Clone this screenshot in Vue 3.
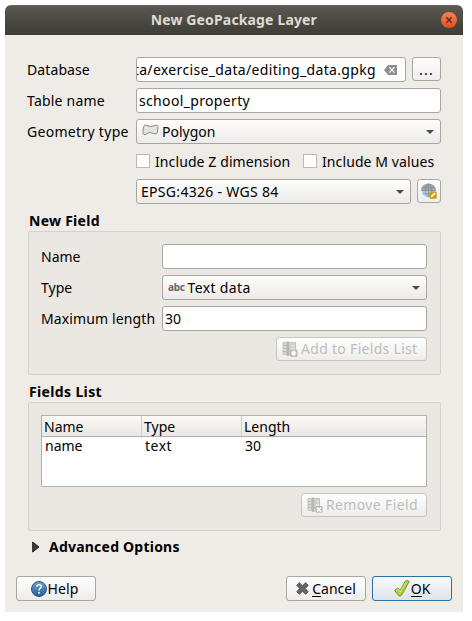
<script setup>
import { ref } from 'vue'

const database = ref('ta/exercise_data/editing_data.gpkg')
const tableName = ref('school_property')
const maxLength = ref('30')
const fields = ref([{ name: 'name', type: 'text', length: '30' }])
</script>

<template>
  <main class="dialog">
    <header class="titlebar">
      <h1 class="title">New GeoPackage Layer</h1>
      <span class="close">
        <svg width="16" height="16" viewBox="0 0 16 16"><path d="M5.3 5.3l5.4 5.4M10.7 5.3l-5.4 5.4" stroke="#45301f" stroke-width="1.3" /></svg>
      </span>
    </header>

    <section class="form">
      <div class="row">
        <span class="label l-db">Database</span>
        <div class="input path">
          <div class="clip"><span class="t-path">{{ database }}</span></div>
          <svg class="clear" width="13" height="10" viewBox="0 0 13 10"><path d="M0 5L4 0H13V10H4Z" fill="#8e8e8e" /><path d="M5.3 2.2l5.2 5.4M10.5 2.2l-5.2 5.4" stroke="#fff" stroke-width="1.2" /></svg>
        </div>
        <button class="btn dots"><span>...</span></button>
      </div>
      <div class="row">
        <span class="label l-table">Table name</span>
        <div class="input"><span class="t-table">{{ tableName }}</span></div>
      </div>
      <div class="row">
        <span class="label l-geom">Geometry type</span>
        <div class="combo">
          <svg class="poly" width="17" height="12" viewBox="0 0 17 12"><path d="M2.4 1.2Q3.5.7 5 1.5Q8.5 3.7 12 1.7Q15.5 .2 16 2.2L15.4 9Q14.8 10.8 11.5 9.4Q7.5 7 4.2 10.1Q1.1 11.9 1 8.2Q.8 3.2 2.4 1.2Z" fill="#e3e3e1" stroke="#8b8b88" /></svg>
          <span class="t-poly">Polygon</span><i class="arrow"></i>
        </div>
      </div>
      <div class="checks">
        <label class="check"><i class="box"></i><span class="t-z">Include Z dimension</span></label>
        <label class="check"><i class="box"></i><span class="t-m">Include M values</span></label>
      </div>
      <div class="row crs">
        <span class="label"></span>
        <div class="combo"><span class="t-epsg">EPSG:4326 - WGS 84</span><i class="arrow"></i></div>
        <button class="btn globe">
          <svg width="16" height="16" viewBox="0 0 16 16"><circle cx="7.5" cy="7.5" r="6.8" fill="#a9c9e4" /><path d="M0 7.5a7.5 7 0 0 1 15 0Z" fill="#a2a5a7" /><path d="M0 7.5h15M1.4 4.5h12M2 10.8h10M7.5.7v13.5M7.5.7Q1.2 7.5 7.5 14.2M7.5.7Q13.8 7.5 7.5 14.2" fill="none" stroke="#74838e" stroke-width=".5" /><rect x="8.5" y="8.5" width="7.2" height="7.2" rx="1" fill="#c8a20b" /><path d="M10 14.2l.6-2 3-2.6 1 1-2.8 2.8Z" fill="#fff" /></svg>
        </button>
      </div>
    </section>

    <h2 class="heading h-new">New Field</h2>
    <section class="group newfield">
      <div class="row">
        <span class="label l-name">Name</span><div class="input"></div>
      </div>
      <div class="row">
        <span class="label l-type">Type</span>
        <div class="combo"><span class="abc">abc</span><span class="t-text">Text data</span><i class="arrow"></i></div>
      </div>
      <div class="row">
        <span class="label l-max">Maximum length</span><div class="input"><span class="num">{{ maxLength }}</span></div>
      </div>
      <button class="btn disabled add">
        <svg width="16" height="16" viewBox="0 0 16 16"><path d="M1 1.5h3.5v12H1z" fill="#dcdad7" stroke="#c6c3bf" /><path d="M4.8.5h2.8v14.5h-2.8z" fill="#b9b6b2" /><path d="M8.2 1.5H13.5v12H8.2z" fill="#e6e4e1" stroke="#c6c3bf" /><path d="M1 4.5h3.5M1 7.5h3.5M1 10.5h3.5M8.5 3h5M8.5 6h5" stroke="#bfbcb8" /><rect x="8" y="8.5" width="7.5" height="7.3" rx="1" fill="#bdbab6" /><path d="M11.7 9.5v5.2M9.1 12.1h5.2M9.9 10.3l3.6 3.6M13.5 10.3l-3.6 3.6" stroke="#fff" stroke-width="1.1" /></svg>
        <span class="t-add">Add to Fields List</span>
      </button>
    </section>

    <h2 class="heading h-list">Fields List</h2>
    <section class="group fieldlist">
      <div class="table">
        <div class="thead"><span class="th-name">Name</span><span class="th-type">Type</span><span class="th-len">Length</span></div>
        <div v-for="f in fields" :key="f.name" class="tr"><span class="td-name">{{ f.name }}</span><span class="td-type">{{ f.type }}</span><span class="num">{{ f.length }}</span></div>
      </div>
      <button class="btn disabled remove">
        <svg width="16" height="16" viewBox="0 0 16 16"><path d="M1 1.5h3.5v12H1z" fill="#dcdad7" stroke="#c6c3bf" /><path d="M4.8.5h2.8v14.5h-2.8z" fill="#b9b6b2" /><path d="M8.2 1.5H12.5v12H8.2z" fill="#e6e4e1" stroke="#c6c3bf" /><path d="M1 4.5h3.5M1 7.5h3.5M1 10.5h3.5M8.5 3h4M8.5 6h4" stroke="#bfbcb8" /><rect x="8.5" y="9" width="7" height="6.8" rx="1.2" fill="#bdbab6" /><path d="M10 10.5l4 4M14 10.5l-4 4" stroke="#fff" stroke-width="1.5" /></svg>
        <span class="t-remove">Remove Field</span>
      </button>
    </section>

    <div class="advanced">
      <svg width="8" height="12" viewBox="0 0 8 12"><path d="M.7 1L7 6L.7 11Z" fill="#3d3d3d" stroke="#222" /></svg>
      <h2 class="t-adv">Advanced Options</h2>
    </div>

    <footer class="footer">
      <button class="btn action help">
        <svg width="16" height="16" viewBox="0 0 16 16"><defs><linearGradient id="hg" x2="0" y2="1"><stop stop-color="#6fa3d3" /><stop offset="1" stop-color="#245f98" /></linearGradient></defs><circle cx="8" cy="8" r="7.5" fill="url(#hg)" stroke="#2b5582" /><path d="M5.8 5.7Q6 3.6 8.1 3.6Q10.3 3.7 10.2 5.6Q10.1 6.8 8.9 7.5Q8 8.1 8 9.4" fill="none" stroke="#fff" stroke-width="1.4" /><circle cx="8" cy="11.7" r=".95" fill="#fff" /></svg>
        <span class="t-help">Help</span>
      </button>
      <button class="btn action cancel">
        <svg width="13" height="13" viewBox="0 0 13 13"><path d="M3.3.8L6.5 3.7L9.7.8L12.2 3.2L9.3 6.5L12.2 9.8L9.7 12.2L6.5 9.3L3.3 12.2L.8 9.8L3.7 6.5L.8 3.2Z" fill="#656565" stroke="#484848" stroke-width=".9" stroke-linejoin="round" /></svg>
        <span class="t-cancel"><u>C</u>ancel</span>
      </button>
      <button class="btn action ok">
        <svg width="16" height="17" viewBox="0 0 16 17"><path d="M.7 10.4L3.8 7.9L6.1 10.4L11.2 1.2Q13.2-.1 15.3 1.4L7.8 14.8Q6.3 16.8 4.6 15.6Z" fill="#b3d335" stroke="#628b22" stroke-width=".9" stroke-linejoin="round" /><path d="M2.4 10.2l1.4-1.1L6.3 12L12 2" fill="none" stroke="#dceb91" /></svg>
        <span class="t-ok"><u>O</u>K</span>
      </button>
    </footer>
  </main>
</template>

<style>
body { background: #fff; }
</style>
<style scoped>
* { box-sizing: border-box; }
.dialog { width: 458px; height: 607px; margin: 5px; background: #efebe7; border-radius: 6px 6px 0 0; display: flex; flex-direction: column; font: 14px/20px "Noto Sans", sans-serif; color: #000; white-space: nowrap; overflow: hidden; }
h1, h2 { margin: 0; font-size: 14px; font-weight: 700; }
.titlebar { height: 30px; flex: none; display: flex; align-items: center; justify-content: flex-end; padding-right: 6px; background: linear-gradient(#5a5850, #3d3c37); border-top: 1px solid #6b6860; }
.title { color: #dfdbd2; font-size: 14px; line-height: 18px; padding-bottom: 2px; margin-right: 124px; letter-spacing: .15px; }
.close { width: 16px; height: 16px; border-radius: 50%; background: linear-gradient(#f5815d, #e3501e); box-shadow: 0 0 0 .5px #6d3a26; display: flex; margin-bottom: 1px; }
.form { padding: 22px 22px 0; display: flex; flex-direction: column; gap: 6px; }
.row { display: flex; height: 25px; }
.form .label { width: 109px; flex: none; line-height: 26px; }
.input, .combo { flex: 1; min-width: 0; display: flex; align-items: center; height: 25px; border: 1px solid #a9a5a1; border-radius: 3px; background: #fff; padding: 0 2px; }
.combo { background: linear-gradient(#fdfdfc, #ecebe9); padding: 0 6px 0 4px; }
.path { padding: 0 8px 0 0; }
.clip { flex: 1; min-width: 0; display: flex; justify-content: flex-end; overflow: hidden; }
.clear { margin-left: 8px; flex: none; }
.arrow { margin-left: auto; border: 4px solid transparent; border-top: 4px solid #4d4d4d; border-bottom: 0; }
.btn { font: inherit; color: #000; margin: 0; padding: 0; border: 1px solid #aaa6a2; border-radius: 3px; background: linear-gradient(#fefefe, #eeedec); display: flex; align-items: center; justify-content: center; flex: none; }
.dots { width: 29px; height: 24px; margin-left: 6px; letter-spacing: 1.2px; padding-top: 1px; }
.poly { margin: -3px 3px 0 1px; }
.checks { display: flex; height: 23px; padding-left: 109px; align-items: center; margin-top: 0; }
.check { display: flex; align-items: center; gap: 5px; letter-spacing: .1px; }
.check:first-child { width: 167px; }
.box { width: 14px; height: 14px; border: 1px solid #bcb8b4; background: #fff; margin-bottom: 1px; }
.globe { width: 24px; height: 24px; margin-left: 6px; }
.heading { height: 20px; margin: 7px 0 0 24px; flex: none; }
.group { margin: 0 22px 0 23px; border: 1px solid #d5d1cd; border-radius: 2px; background: #ebe7e3; padding: 12px 13px 0 12px; flex: none; display: flex; flex-direction: column; }
.newfield { height: 144px; gap: 6px; }
.newfield .label { width: 121px; flex: none; line-height: 25px; }
.abc { font-size: 10px; font-weight: 700; color: #666; margin: -2px 3px 0 1px; letter-spacing: -.3px; }
.disabled { align-self: flex-end; height: 24px; color: #bebdbb; border-color: #c8c5c1; justify-content: flex-start; padding-left: 5px; gap: 3px; }
.add { width: 151px; }
.remove { width: 126px; }
.fieldlist { height: 129px; gap: 6px; }
.table { height: 72px; border: 1px solid #b3afab; background: #fff; }
.thead { display: grid; grid-template-columns: 99px 100px 1fr; height: 21px; background: linear-gradient(#fbf8f6, #eae8e5); border-bottom: 1px solid #b3afab; line-height: 22px; }
.thead span { padding-left: 2px; border-left: 1px solid #cfccc8; }
.thead span:first-child { border-left: 0; }
.tr { display: grid; grid-template-columns: 100px 100px 1fr; padding-left: 3px; line-height: 18px; }
.advanced { display: flex; align-items: center; height: 20px; margin: 6px 0 0 27px; gap: 9px; flex: none; }
.footer { display: flex; gap: 6px; margin-top: 19px; padding: 0 11px; flex: none; }
.action { width: 80px; height: 25px; }
.help { margin-right: auto; padding-right: 2px; }
.cancel { gap: 3px; }
.ok { border-color: #2a72a4; background: linear-gradient(#f8fafb, #dde4e9); gap: 1px; }
u { text-decoration: none; display: inline-block; height: 18px; line-height: 20px; border-bottom: 1px solid #000; }
.l-db { letter-spacing: .1px; }
.l-table { letter-spacing: .22px; }
.l-geom { letter-spacing: .3px; }
.t-path, .t-table { letter-spacing: .34px; }
.t-epsg { letter-spacing: .3px; }
.h-new { letter-spacing: .27px; }
.l-max { letter-spacing: .12px; }
.t-text { letter-spacing: .35px; }
.t-add { letter-spacing: .3px; }
.h-list { letter-spacing: .36px; }
.t-remove { letter-spacing: .37px; }
.td-type { letter-spacing: .5px; }
.t-adv { letter-spacing: .22px; }
.t-help { letter-spacing: .15px; }
</style>
